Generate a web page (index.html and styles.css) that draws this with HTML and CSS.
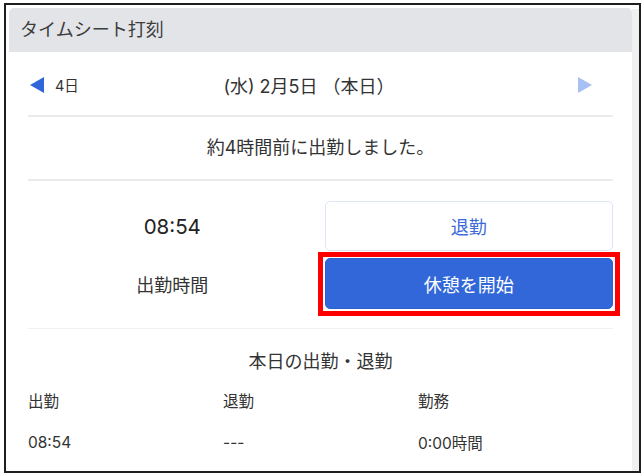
FILE: index.html
```html
<!DOCTYPE html>
<html lang="ja">
<head>
<meta charset="utf-8">
<title>タイムシート打刻</title>
<link rel="stylesheet" href="styles.css">
</head>
<body>
<div class="frame">
  <div class="card">
    <div class="card-header">タイムシート打刻</div>
    <div class="card-body">
      <div class="date-row">
        <a class="nav prev" href="#">
          <svg width="14" height="16" viewBox="0 0 14 16"><polygon points="0,8 14,0 14,16" fill="#2f66d9"/></svg>
          <span>4日</span>
        </a>
        <div class="date-title">(水) 2月5日 （本日）</div>
        <a class="nav next" href="#">
          <svg width="14" height="16" viewBox="0 0 14 16"><polygon points="0,0 14,8 0,16" fill="#a7c0f4"/></svg>
        </a>
      </div>
      <div class="message">約4時間前に出勤しました。</div>
      <div class="punch">
        <div class="punch-time">08:54</div>
        <button class="btn btn-outline">退勤</button>
        <div class="punch-label">出勤時間</div>
        <div class="highlight">
          <button class="btn btn-primary">休憩を開始</button>
        </div>
      </div>
      <div class="summary">
        <div class="summary-title">本日の出勤・退勤</div>
        <div class="summary-grid">
          <div class="th">出勤</div>
          <div class="th">退勤</div>
          <div class="th">勤務</div>
          <div class="td">08:54</div>
          <div class="td">---</div>
          <div class="td">0:00時間</div>
        </div>
      </div>
    </div>
  </div>
  <div class="side-strip"></div>
</div>
</body>
</html>
```

FILE: styles.css
```css
* { box-sizing: border-box; }

html, body {
  margin: 0;
  padding: 0;
  background: #ffffff;
}

body {
  padding: 3px 1px 0 4px;
  font-family: "Inter", "Noto Sans CJK JP", sans-serif;
  color: #333333;
}

.frame {
  display: flex;
  width: 637px;
  height: 470px;
  border: 2px solid #1e1e1e;
  overflow: hidden;
  background: #ffffff;
}

.card {
  width: 623px;
  margin: 3px 0 0 3px;
  background: #ffffff;
  flex: none;
}

.side-strip {
  flex: 1;
  margin-top: 4px;
  background: #f0f0f0;
}

.card-header {
  height: 44px;
  background: #e2e4e8;
  border-radius: 5px 5px 0 0;
  padding: 0 0 5px 11px;
  display: flex;
  align-items: center;
  font-size: 18px;
  color: #3c3c3c;
  font-family: "Noto Sans CJK JP", sans-serif;
}

.card-body {
  padding: 0 19px;
}

.date-row {
  height: 65px;
  display: grid;
  grid-template-columns: 1fr auto 1fr;
  align-items: center;
  border-bottom: 2px solid #ebebeb;
  padding: 2px 21px 0 2px;
}

.nav {
  display: flex;
  align-items: center;
  gap: 11px;
  text-decoration: none;
  color: #333333;
  font-size: 14.5px;
}

.nav.next { justify-self: end; }

.date-title {
  font-size: 18px;
  padding-right: 4px;
}

.message {
  height: 64px;
  display: flex;
  align-items: center;
  justify-content: center;
  font-size: 18px;
  border-bottom: 2px solid #ebebeb;
  padding-bottom: 5px;
}

.punch {
  display: grid;
  grid-template-columns: 1fr 1fr;
  grid-template-rows: 50px 51px;
  column-gap: 8px;
  row-gap: 7px;
  padding: 20px 0 19px;
  border-bottom: 1px solid #f1f1f1;
  align-items: center;
}

.punch-time {
  text-align: center;
  font-size: 20.5px;
  font-weight: 400;
  color: #222222;
}

.punch-label {
  text-align: center;
  font-size: 18px;
}

.btn {
  width: 100%;
  height: 100%;
  border-radius: 5px;
  font-family: "Noto Sans CJK JP", sans-serif;
  font-size: 18px;
  cursor: pointer;
}

.btn-outline {
  background: #ffffff;
  border: 1.5px solid #dde5f6;
  color: #3a6ad8;
}

.btn-primary {
  background: #3167d8;
  border: 1px solid #2c60cf;
  color: #ffffff;
}

.highlight {
  position: relative;
  height: 100%;
}

.highlight::after {
  content: "";
  position: absolute;
  inset: -6px -7px -7px -7px;
  border: 5px solid #ff0000;
  pointer-events: none;
}

.summary {
  padding-top: 22px;
}

.summary-title {
  text-align: center;
  font-size: 18px;
  line-height: 22px;
}

.summary-grid {
  display: grid;
  grid-template-columns: 1fr 1fr 1fr;
  grid-template-rows: 40px 44px;
  align-items: center;
  margin-top: 7px;
}

.th {
  font-size: 15.5px;
}

.td {
  font-size: 15.5px;
}
```
